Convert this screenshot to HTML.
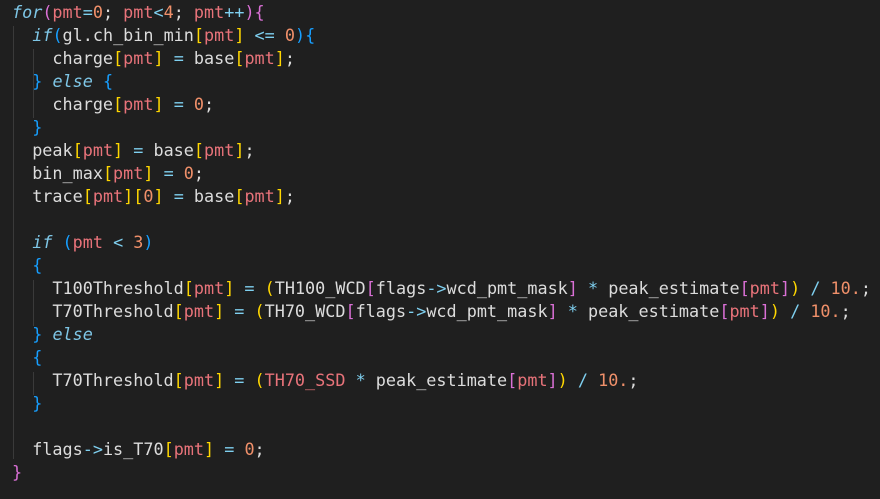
<!DOCTYPE html>
<html><head><style>
body{margin:0;background:#1f1f1f;width:880px;height:499px;overflow:hidden}
pre{margin:0;position:absolute;left:12px;top:1px;font-family:"DejaVu Sans Mono","Liberation Mono",monospace;font-size:16.8px;line-height:23px;color:#dcdcdc}
.k{color:#7ec6e6;font-style:italic}.v{color:#e8737a}.n{color:#f0906a}.o{color:#7fd0f0}
.m{color:#da70d6}.b{color:#179fff}.g{color:#ffd700}
.guide{position:absolute;width:1px;background:#3a3a3a}
</style></head><body>
<div class="guide" style="left:13px;top:26px;height:433px"></div>
<div class="guide" style="left:33px;top:49px;height:46px"></div>
<div class="guide" style="left:33px;top:95px;height:23px"></div>
<div class="guide" style="left:33px;top:280px;height:46px"></div>
<div class="guide" style="left:33px;top:372px;height:23px"></div>
<pre><span class="k">for</span><span class="m">(</span><span class="v">pmt</span><span class="o">=</span><span class="n">0</span>; <span class="v">pmt</span><span class="o">&lt;</span><span class="n">4</span>; <span class="v">pmt</span><span class="o">++</span><span class="m">){</span>
  <span class="k">if</span><span class="b">(</span>gl.ch_bin_min<span class="g">[</span><span class="v">pmt</span><span class="g">]</span> <span class="o">&lt;=</span> <span class="n">0</span><span class="b">){</span>
    charge<span class="g">[</span><span class="v">pmt</span><span class="g">]</span> <span class="o">=</span> base<span class="g">[</span><span class="v">pmt</span><span class="g">]</span>;
  <span class="b">}</span> <span class="k">else</span> <span class="b">{</span>
    charge<span class="g">[</span><span class="v">pmt</span><span class="g">]</span> <span class="o">=</span> <span class="n">0</span>;
  <span class="b">}</span>
  peak<span class="g">[</span><span class="v">pmt</span><span class="g">]</span> <span class="o">=</span> base<span class="g">[</span><span class="v">pmt</span><span class="g">]</span>;
  bin_max<span class="g">[</span><span class="v">pmt</span><span class="g">]</span> <span class="o">=</span> <span class="n">0</span>;
  trace<span class="g">[</span><span class="v">pmt</span><span class="g">][</span><span class="n">0</span><span class="g">]</span> <span class="o">=</span> base<span class="g">[</span><span class="v">pmt</span><span class="g">]</span>;

  <span class="k">if</span> <span class="b">(</span><span class="v">pmt</span> <span class="o">&lt;</span> <span class="n">3</span><span class="b">)</span>
  <span class="b">{</span>
    T100Threshold<span class="g">[</span><span class="v">pmt</span><span class="g">]</span> <span class="o">=</span> <span class="g">(</span>TH100_WCD<span class="m">[</span>flags<span class="o">-&gt;</span>wcd_pmt_mask<span class="m">]</span> <span class="o">*</span> peak_estimate<span class="m">[</span><span class="v">pmt</span><span class="m">]</span><span class="g">)</span> <span class="o">/</span> <span class="n">10.</span>;
    T70Threshold<span class="g">[</span><span class="v">pmt</span><span class="g">]</span> <span class="o">=</span> <span class="g">(</span>TH70_WCD<span class="m">[</span>flags<span class="o">-&gt;</span>wcd_pmt_mask<span class="m">]</span> <span class="o">*</span> peak_estimate<span class="m">[</span><span class="v">pmt</span><span class="m">]</span><span class="g">)</span> <span class="o">/</span> <span class="n">10.</span>;
  <span class="b">}</span> <span class="k">else</span>
  <span class="b">{</span>
    T70Threshold<span class="g">[</span><span class="v">pmt</span><span class="g">]</span> <span class="o">=</span> <span class="g">(</span><span class="v">TH70_SSD</span> <span class="o">*</span> peak_estimate<span class="m">[</span><span class="v">pmt</span><span class="m">]</span><span class="g">)</span> <span class="o">/</span> <span class="n">10.</span>;
  <span class="b">}</span>

  flags<span class="o">-&gt;</span>is_T70<span class="g">[</span><span class="v">pmt</span><span class="g">]</span> <span class="o">=</span> <span class="n">0</span>;
<span class="m">}</span></pre>
</body></html>
